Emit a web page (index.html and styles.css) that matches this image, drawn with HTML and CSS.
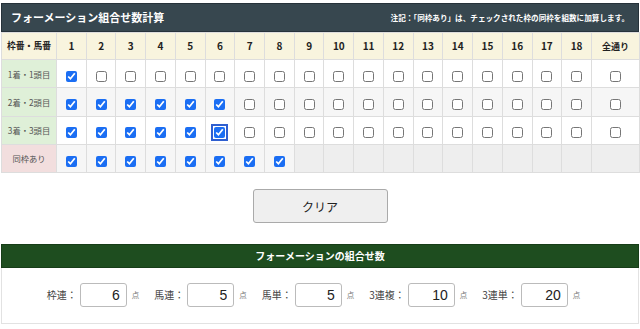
FILE: index.html
```html
<!DOCTYPE html>
<html lang="ja">
<head>
<meta charset="utf-8">
<title>フォーメーション組合せ数計算</title>
<link rel="stylesheet" href="styles.css">
</head>
<body>
<div class="wrap">
  <div class="titlebar">
    <h1 class="title">フォーメーション組合せ数計算</h1>
    <p class="note">注記：「同枠あり」は、チェックされた枠の同枠を組数に加算します。</p>
  </div>
  <table class="grid">
    <colgroup>
      <col class="c-label">
      <col span="18" class="c-num">
      <col class="c-all">
    </colgroup>
    <thead>
      <tr>
        <th class="h-label">枠番・馬番</th>
        <th>1</th><th>2</th><th>3</th><th>4</th><th>5</th><th>6</th><th>7</th><th>8</th><th>9</th>
        <th>10</th><th>11</th><th>12</th><th>13</th><th>14</th><th>15</th><th>16</th><th>17</th><th>18</th>
        <th class="h-all">全通り</th>
      </tr>
    </thead>
    <tbody>
      <tr class="row-white">
        <th class="r-label green">1着・1頭目</th>
        <td><input type="checkbox" checked></td>
        <td><input type="checkbox"></td><td><input type="checkbox"></td><td><input type="checkbox"></td><td><input type="checkbox"></td><td><input type="checkbox"></td><td><input type="checkbox"></td><td><input type="checkbox"></td><td><input type="checkbox"></td>
        <td><input type="checkbox"></td><td><input type="checkbox"></td><td><input type="checkbox"></td><td><input type="checkbox"></td><td><input type="checkbox"></td><td><input type="checkbox"></td><td><input type="checkbox"></td><td><input type="checkbox"></td><td><input type="checkbox"></td>
        <td><input type="checkbox"></td>
      </tr>
      <tr class="row-gray">
        <th class="r-label green">2着・2頭目</th>
        <td><input type="checkbox" checked></td><td><input type="checkbox" checked></td><td><input type="checkbox" checked></td><td><input type="checkbox" checked></td><td><input type="checkbox" checked></td><td><input type="checkbox" checked></td>
        <td><input type="checkbox"></td><td><input type="checkbox"></td><td><input type="checkbox"></td>
        <td><input type="checkbox"></td><td><input type="checkbox"></td><td><input type="checkbox"></td><td><input type="checkbox"></td><td><input type="checkbox"></td><td><input type="checkbox"></td><td><input type="checkbox"></td><td><input type="checkbox"></td><td><input type="checkbox"></td>
        <td><input type="checkbox"></td>
      </tr>
      <tr class="row-white">
        <th class="r-label green">3着・3頭目</th>
        <td><input type="checkbox" checked></td><td><input type="checkbox" checked></td><td><input type="checkbox" checked></td><td><input type="checkbox" checked></td><td><input type="checkbox" checked></td><td><input type="checkbox" class="focused" checked></td>
        <td><input type="checkbox"></td><td><input type="checkbox"></td><td><input type="checkbox"></td>
        <td><input type="checkbox"></td><td><input type="checkbox"></td><td><input type="checkbox"></td><td><input type="checkbox"></td><td><input type="checkbox"></td><td><input type="checkbox"></td><td><input type="checkbox"></td><td><input type="checkbox"></td><td><input type="checkbox"></td>
        <td><input type="checkbox"></td>
      </tr>
      <tr class="row-gray">
        <th class="r-label pink">同枠あり</th>
        <td><input type="checkbox" checked></td><td><input type="checkbox" checked></td><td><input type="checkbox" checked></td><td><input type="checkbox" checked></td><td><input type="checkbox" checked></td><td><input type="checkbox" checked></td><td><input type="checkbox" checked></td><td><input type="checkbox" checked></td>
        <td class="empty"></td><td class="empty"></td><td class="empty"></td><td class="empty"></td><td class="empty"></td><td class="empty"></td><td class="empty"></td><td class="empty"></td><td class="empty"></td><td class="empty"></td>
        <td class="empty"></td>
      </tr>
    </tbody>
  </table>

  <div class="actions">
    <button type="button" class="clear">クリア</button>
  </div>

  <div class="resultbar">フォーメーションの組合せ数</div>
  <div class="results">
    <div class="field"><span class="lbl">枠連：</span><input class="num" type="text" value="6"><span class="unit">点</span></div>
    <div class="field"><span class="lbl">馬連：</span><input class="num" type="text" value="5"><span class="unit">点</span></div>
    <div class="field"><span class="lbl">馬単：</span><input class="num" type="text" value="5"><span class="unit">点</span></div>
    <div class="field"><span class="lbl">3連複：</span><input class="num" type="text" value="10"><span class="unit">点</span></div>
    <div class="field"><span class="lbl">3連単：</span><input class="num" type="text" value="20"><span class="unit">点</span></div>
  </div>
</div>
</body>
</html>
```

FILE: styles.css
```css
* { box-sizing: border-box; }

html, body {
  margin: 0;
  padding: 0;
  background: #ffffff;
}

body {
  font-family: "Noto Sans CJK JP", "Noto Sans", sans-serif;
  color: #333333;
}

.wrap {
  width: 638px;
  margin: 3px 1px 0 1px;
}

.titlebar {
  height: 29px;
  background: #37474f;
  border: 1px solid #26323a;
  display: flex;
  align-items: center;
  justify-content: space-between;
  padding: 0 9px 0 9px;
}

.title {
  margin: 0;
  font-size: 11px;
  line-height: 1;
  font-weight: 700;
  color: #ffffff;
}

.note {
  margin: 0;
  font-size: 7.6px;
  line-height: 1;
  font-weight: 700;
  color: #ffffff;
}

.grid {
  width: 638px;
  border-collapse: collapse;
  table-layout: fixed;
}

.c-label { width: 55px; }
.c-num { width: 29.72px; }
.c-all { width: 48px; }

.grid th,
.grid td {
  border: 1px solid #dddddd;
  text-align: center;
  vertical-align: middle;
  padding: 0;
}

.grid thead th {
  height: 27px;
  background: #f8f4de;
  font-size: 10px;
  font-weight: 700;
  color: #222222;
  line-height: 1;
}

.grid thead th.h-label {
  font-size: 8.8px;
}

.grid thead th.h-all {
  font-size: 9px;
}

.grid tbody tr {
  height: 28.3px;
}

.grid tbody th,
.grid tbody td {
  height: 28.3px;
}

.row-white td { background: #ffffff; }
.row-gray td { background: #f6f6f6; }

.r-label {
  font-size: 8.3px;
  font-weight: 400;
  color: #555555;
  line-height: 1;
}

.r-label.green { background: #dff0d8; }
.r-label.pink { background: #f2dede; }

.grid td.empty {
  background-color: #eeeeee;
  background-image: radial-gradient(#e4e4e4 0.6px, transparent 0.7px);
  background-size: 2px 2px;
}

.grid input[type="checkbox"] {
  width: 11px;
  height: 11px;
  margin: 0;
  vertical-align: middle;
  accent-color: #1b6ef3;
}

.grid input.focused {
  outline: 2px solid #2f5fd0;
  outline-offset: 1px;
  border-radius: 2px;
}

.actions {
  display: flex;
  justify-content: center;
  padding: 16px 0 21px 0;
}

.clear {
  width: 135px;
  height: 34px;
  background: #efefef;
  border: 1px solid #aaaaaa;
  border-radius: 3px;
  font-family: "Noto Sans CJK JP", sans-serif;
  font-size: 12px;
  color: #222222;
  padding: 0;
}

.resultbar {
  height: 24px;
  background: #1e4d1f;
  border: 1px solid #173d18;
  color: #ffffff;
  font-size: 10px;
  font-weight: 700;
  display: flex;
  align-items: center;
  justify-content: center;
  line-height: 1;
}

.results {
  height: 56px;
  border: 1px solid #e2e2e2;
  border-top: none;
  display: flex;
  align-items: center;
  justify-content: center;
  padding: 0 13px 1px 0;
  gap: 15px;
}

.field {
  display: flex;
  align-items: center;
}

.lbl {
  font-size: 10px;
  color: #444444;
  line-height: 1;
  margin-right: 3px;
}

.num {
  width: 47px;
  height: 24px;
  border: 1px solid #bbbbbb;
  border-radius: 3px;
  font-family: "Liberation Sans", Arial, sans-serif;
  font-size: 14px;
  color: #222222;
  text-align: right;
  padding: 0 6px 0 0;
  background: #ffffff;
}

.unit {
  font-size: 7.5px;
  color: #777777;
  margin-left: 5px;
  line-height: 1;
}
```
